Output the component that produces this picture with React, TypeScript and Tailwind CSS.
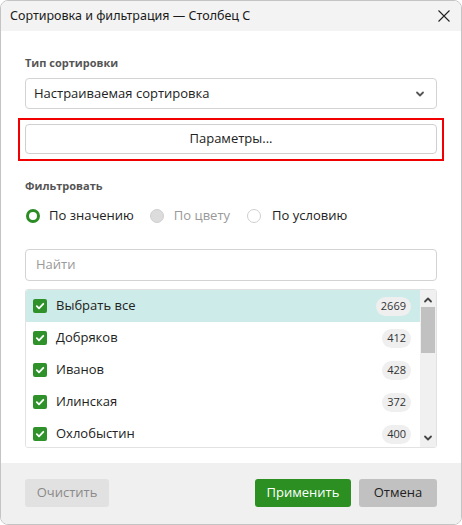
import React from "react";

const rows = [
  { name: "Выбрать все", count: "2669", hl: true },
  { name: "Добряков", count: "412" },
  { name: "Иванов", count: "428" },
  { name: "Илинская", count: "372" },
  { name: "Охлобыстин", count: "400" },
];

function Check() {
  return (
    <span className="flex h-[14px] w-[14px] shrink-0 items-center justify-center rounded-[2px] bg-[#2f912a]">
      <svg width="10" height="10" viewBox="0 0 10 10" fill="none">
        <path d="M1.8 5.2 L4 7.3 L8.3 2.8" stroke="white" strokeWidth="1.8" strokeLinecap="round" strokeLinejoin="round" />
      </svg>
    </span>
  );
}

export default function App() {
  return (
    <div
      className="h-[525px] w-[462px] overflow-hidden rounded-[8px] border border-[#c4c4c4] bg-white text-[#222]"
      style={{ fontFamily: '"Open Sans", "Noto Sans", sans-serif' }}
    >
      <div className="flex h-[30px] items-center justify-between bg-[#f3f3f3] pl-[9px] pr-[9px]">
        <span className="text-[12.5px] text-[#1a1a1a]" style={{ fontFamily: '"Noto Sans", sans-serif' }}>
          Сортировка и фильтрация — Столбец С
        </span>
        <svg width="14" height="14" viewBox="0 0 14 14" className="mr-[1px]">
          <path d="M1.5 1.5 L12.5 12.5 M12.5 1.5 L1.5 12.5" stroke="#222" strokeWidth="1.1" />
        </svg>
      </div>

      <div className="flex flex-col px-[24px] pb-[15px] pt-[24px]">
        <div className="h-[16px] text-[11px] font-bold leading-[16px] text-[#555]">Тип сортировки</div>
        <div className="mt-[7px] flex h-[31px] items-center justify-between rounded-[4px] border border-[#d3d3d3] pl-[8px] pr-[11px]">
          <span className="text-[13px] text-[#222]">Настраиваемая сортировка</span>
          <svg width="10" height="8" viewBox="0 0 10 8">
            <path d="M2 2.5 L5 5.5 L8 2.5" stroke="#555" strokeWidth="1.8" fill="none" strokeLinecap="round" strokeLinejoin="round" />
          </svg>
        </div>
        <div className="-mx-[7px] mt-[9px] h-[43px] border-2 border-[#f00000] px-[5px] pt-[4px]">
          <div className="flex h-[30px] items-center justify-center rounded-[4px] border border-[#cfcfcf] bg-white text-[13px] text-[#222]">
            Параметры...
          </div>
        </div>

        <div className="mt-[17px] h-[16px] text-[11px] font-bold leading-[16px] text-[#555]">Фильтровать</div>
        <div className="mt-[12px] flex h-[20px] items-center text-[13px]">
          <span className="ml-[1px] h-[14px] w-[14px] rounded-full border-[3.5px] border-[#2a8c23] bg-white" />
          <span className="ml-[9px] text-[#222]">По значению</span>
          <span className="ml-[16px] h-[14px] w-[14px] rounded-full border border-[#cfcfcf] bg-[#dcdcdc]" />
          <span className="ml-[10px] text-[#999]">По цвету</span>
          <span className="ml-[17px] h-[14px] w-[14px] rounded-full border border-[#cfcfcf] bg-white" />
          <span className="ml-[11px] text-[#222]">По условию</span>
        </div>

        <div className="mt-[23px] flex h-[32px] items-center rounded-[4px] border border-[#d3d3d3] pl-[10px] text-[13px] text-[#999]">
          Найти
        </div>

        <div className="mt-[8px] flex h-[159px] overflow-hidden rounded-[3px] border border-[#e2e2e2]">
          <div className="flex-1 overflow-hidden">
            {rows.map((r) => (
              <div
                key={r.name}
                className={`flex h-[32px] shrink-0 items-center pl-[7px] pr-[9px] ${r.hl ? "bg-[#cdebe8]" : "bg-white"}`}
              >
                <Check />
                <span className="ml-[9px] flex-1 text-[13px] text-[#222]">{r.name}</span>
                <span className="flex h-[19px] items-center rounded-full bg-[#efefef] px-[5px] text-[11px] text-[#333]">
                  {r.count}
                </span>
              </div>
            ))}
          </div>
          <div className="flex w-[16px] flex-col items-center bg-[#f0f0f0]">
            <svg width="10" height="8" viewBox="0 0 10 8" className="mt-[6px]">
              <path d="M2 5.5 L5 2.5 L8 5.5" stroke="#444" strokeWidth="1.8" fill="none" strokeLinecap="round" strokeLinejoin="round" />
            </svg>
            <div className="mt-[3px] h-[46px] w-[14px] bg-[#c1c1c1]" />
            <div className="flex-1" />
            <svg width="10" height="8" viewBox="0 0 10 8" className="mb-[5px]">
              <path d="M2 2.5 L5 5.5 L8 2.5" stroke="#444" strokeWidth="1.8" fill="none" strokeLinecap="round" strokeLinejoin="round" />
            </svg>
          </div>
        </div>
      </div>

      <div className="flex h-[62px] items-start bg-[#f0f0f0] px-[24px] pt-[16px]">
        <div className="flex h-[28px] w-[84px] items-center justify-center rounded-[3px] bg-[#e1e1e1] text-[13px] text-[#8a8a8a]">
          Очистить
        </div>
        <div className="flex-1" />
        <div className="flex h-[28px] w-[96px] items-center justify-center rounded-[3px] bg-[#2b8f22] text-[13px] text-white">
          Применить
        </div>
        <div className="ml-[8px] flex h-[28px] w-[78px] items-center justify-center rounded-[3px] bg-[#c1c1c1] text-[13px] text-[#222]">
          Отмена
        </div>
      </div>
    </div>
  );
}
